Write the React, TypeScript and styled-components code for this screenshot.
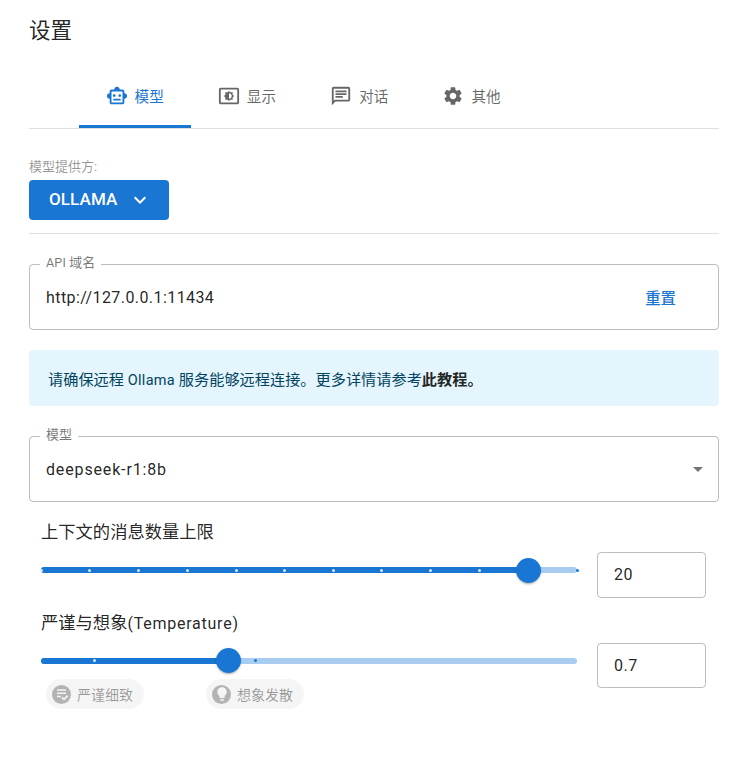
import React from 'react';
import styled, { createGlobalStyle } from 'styled-components';
import { MdOutlineSmartToy, MdOutlineSettingsBrightness, MdOutlineChat, MdSettings, MdKeyboardArrowDown, MdArrowDropDown, MdLightbulb } from 'react-icons/md';

const Global = createGlobalStyle`
  html, body { margin: 0; padding: 0; background: #fff; }
  body { font-family: Roboto, "Liberation Sans", "Noto Sans CJK SC", sans-serif; color: rgba(0,0,0,.87); }
  * { box-sizing: border-box; }
`;
const Page = styled.div`width: 749px; height: 760px; padding: 16px 30px 0 29px; overflow: hidden;`;
const Title = styled.h2`margin: 0 0 24px; font-size: 21.5px; line-height: 30px; font-weight: 400;`;
const TabBar = styled.div`display: flex; padding-left: 50px; height: 59px; margin-bottom: -1px; border-bottom: 1px solid #e0e0e0;`;
const Tab = styled.div<{ $active?: boolean }>`
  width: 112.3px; height: 58px; display: flex; align-items: center; justify-content: center; gap: 7px; font-size: 14.6px;
  padding: 0 1px 4px 0;
  color: ${p => (p.$active ? '#1976d2' : 'rgba(0,0,0,.6)')};
  border-bottom: 3px solid ${p => (p.$active ? '#1976d2' : 'transparent')};
  svg { font-size: 22px; flex: none; }
`;
const Small = styled.div`margin-top: 31px; font-size: 13px; line-height: 16px; color: rgba(0,0,0,.42); height: 16px;`;
const ProviderButton = styled.div`
  margin-top: 5px; width: 140px; height: 40px; background: #1976d2; color: #fff; border-radius: 4px;
  display: flex; align-items: center; padding: 0 0 2px 20px; gap: 11px; font-size: 17px; font-weight: 500; letter-spacing: .1px;
  svg { font-size: 24px; margin-top: 2px; }
`;
const Divider = styled.div`margin-top: 13px; height: 1px; background: #e0e0e0;`;
const Field = styled.div<{ $mt: number; $ls: number }>`
  position: relative; margin-top: ${p => p.$mt}px; height: 66px; border: 1px solid rgba(0,0,0,.26); border-radius: 4px;
  display: flex; align-items: center; justify-content: space-between; padding: 0 16px; font-size: 16px; letter-spacing: ${p => p.$ls}px;
`;
const Legend = styled.span`
  position: absolute; top: -11px; left: 10px; background: #fff; padding: 0 6px; font-size: 13px; line-height: 18px; letter-spacing: 0; color: rgba(0,0,0,.55);
`;
const LegendLatin = styled.span`font-size: 12.5px; letter-spacing: .2px;`;
const LinkButton = styled.span`margin-right: 26px; font-size: 15.4px; font-weight: 500; color: #1976d2; letter-spacing: 0;`;
const Alert = styled.div`
  margin-top: 20px; height: 56px; background: #e5f5fd; border-radius: 4px; padding: 0 19px; display: flex; align-items: center;
  font-size: 15.2px; color: #014361;
  b { font-weight: 700; color: rgba(0,0,0,.87); }
`;
const AlertLatin = styled.span`font-size: 14.5px; letter-spacing: .3px;`;
const Arrow = styled.span`display: flex; margin-right: -8px; color: rgba(0,0,0,.54); svg { font-size: 24px; }`;
const SliderBlock = styled.div<{ $mt: number }>`margin-top: ${p => p.$mt}px; padding-left: 12px;`;
const Label = styled.div`height: 24px; font-size: 17.3px; line-height: 24px; letter-spacing: 0;`;
const LabelLatin = styled.span`font-size: 16px; letter-spacing: .76px;`;
const SliderRow = styled.div`display: flex; align-items: flex-start; gap: 20px; padding-right: 13px; margin-top: 8px;`;
const Track = styled.div`position: relative; width: 536px; height: 6px; background: #a9cdf0; border-radius: 3px;`;
const SliderArea = styled.div`width: 536px; height: 45px; padding-top: 15px;`;
const Fill = styled.div`position: absolute; left: 0; top: 0; height: 6px; background: #1976d2; border-radius: 3px;`;
const Mark = styled.span<{ $on: boolean }>`
  position: absolute; top: 1.5px; width: 3px; height: 3px; border-radius: 50%; background: ${p => (p.$on ? '#dbe9f8' : '#1976d2')};
`;
const Thumb = styled.span`
  position: absolute; top: -9.5px; width: 25px; height: 25px; margin-left: -12.5px; border-radius: 50%; background: #1976d2;
  box-shadow: 0 2px 2px -1px rgba(0,0,0,.2), 0 1px 3px rgba(0,0,0,.14);
`;
const NumberBox = styled.div`
  width: 109px; height: 45.5px; border: 1px solid rgba(0,0,0,.26); border-radius: 4px; display: flex; align-items: center; padding-left: 16px; font-size: 16px; letter-spacing: .5px;
`;
const Chips = styled.div`display: flex; gap: 62px; padding-left: 5px; margin-top: -9px;`;
const Chip = styled.div`
  height: 30px; width: 98px; border-radius: 15px; background: #f5f5f5; display: flex; align-items: center; padding-left: 6px; gap: 6px; font-size: 14px; color: rgba(0,0,0,.38);
`;
const ChipIcon = styled.span`
  width: 19px; height: 19px; border-radius: 50%; background: #b3b3b3; color: #f5f5f5; display: flex; align-items: center; justify-content: center; flex: none;
  svg { font-size: 16px; }
`;

function NoteCheckIcon() {
  return (
    <svg width="1em" height="1em" viewBox="0 0 16 16" fill="none" stroke="currentColor" strokeWidth="1.5">
      <path d="M3 4h9M3 7.2h9M3 10.4h4" />
      <path d="M8 11.4l2 2 3.6-3.8" strokeWidth="1.7" />
    </svg>
  );
}

function Slider({ pct, marks }: { pct: number; marks: number[] }) {
  return (
    <SliderArea>
      <Track>
        <Fill style={{ width: `${pct}%` }} />
        {marks.map(m => <Mark key={m} $on={m <= pct} style={{ left: `calc(${m}% - 1.5px)` }} />)}
        <Thumb style={{ left: `${pct}%` }} />
      </Track>
    </SliderArea>
  );
}

export default function App() {
  return (
    <Page>
      <Global />
      <Title>设置</Title>
      <TabBar>
        <Tab $active><MdOutlineSmartToy />模型</Tab>
        <Tab><MdOutlineSettingsBrightness />显示</Tab>
        <Tab><MdOutlineChat />对话</Tab>
        <Tab><MdSettings />其他</Tab>
      </TabBar>
      <Small>模型提供方:</Small>
      <ProviderButton>OLLAMA<MdKeyboardArrowDown /></ProviderButton>
      <Divider />
      <Field $mt={30} $ls={0.42}><Legend><LegendLatin>API </LegendLatin>域名</Legend>http://127.0.0.1:11434<LinkButton>重置</LinkButton></Field>
      <Alert><span>请确保远程 <AlertLatin>Ollama</AlertLatin> 服务能够远程连接。更多详情请参考<b>此教程。</b></span></Alert>
      <Field $mt={30} $ls={0.85}><Legend>模型</Legend>deepseek-r1:8b<Arrow><MdArrowDropDown /></Arrow></Field>
      <SliderBlock $mt={18}>
        <Label>上下文的消息数量上限</Label>
        <SliderRow>
          <Slider pct={90.9} marks={[0, 9.1, 18.2, 27.3, 36.4, 45.5, 54.5, 63.6, 72.7, 81.8, 90.9, 100]} />
          <NumberBox>20</NumberBox>
        </SliderRow>
      </SliderBlock>
      <SliderBlock $mt={13}>
        <Label>严谨与想象<LabelLatin>(Temperature)</LabelLatin></Label>
        <SliderRow>
          <Slider pct={35} marks={[10, 40]} />
          <NumberBox>0.7</NumberBox>
        </SliderRow>
        <Chips>
          <Chip><ChipIcon><NoteCheckIcon /></ChipIcon>严谨细致</Chip>
          <Chip><ChipIcon><MdLightbulb /></ChipIcon>想象发散</Chip>
        </Chips>
      </SliderBlock>
    </Page>
  );
}
